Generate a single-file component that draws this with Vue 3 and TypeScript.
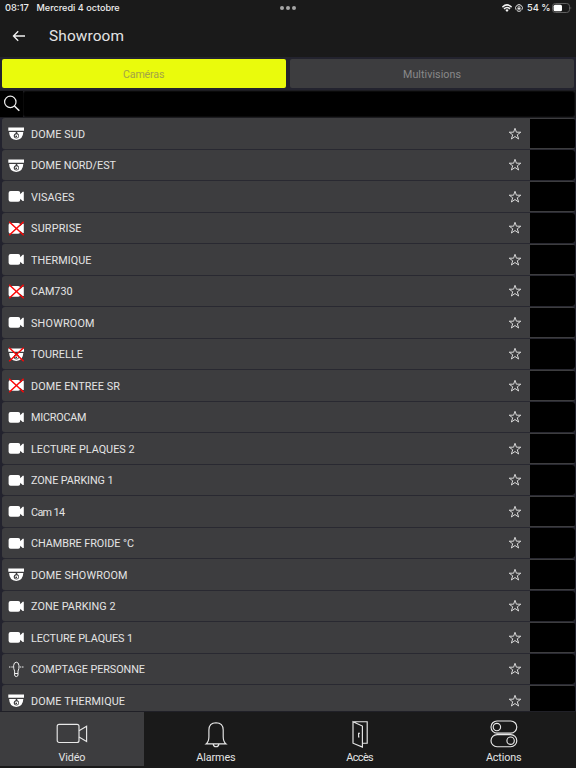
<script setup lang="ts">
type Kind = 'dome' | 'cam' | 'count'
interface Camera {
  name: string
  kind: Kind
  width: number
  off?: boolean
}

const cameras: Camera[] = [
  { name: 'DOME SUD', kind: 'dome', width: 54 },
  { name: 'DOME NORD/EST', kind: 'dome', width: 85 },
  { name: 'VISAGES', kind: 'cam', width: 43.5 },
  { name: 'SURPRISE', kind: 'cam', width: 50.5, off: true },
  { name: 'THERMIQUE', kind: 'cam', width: 60.5 },
  { name: 'CAM730', kind: 'cam', width: 41.5, off: true },
  { name: 'SHOWROOM', kind: 'cam', width: 63.5 },
  { name: 'TOURELLE', kind: 'dome', width: 52, off: true },
  { name: 'DOME ENTREE SR', kind: 'cam', width: 89, off: true },
  { name: 'MICROCAM', kind: 'cam', width: 55.5 },
  { name: 'LECTURE PLAQUES 2', kind: 'cam', width: 103.5 },
  { name: 'ZONE PARKING 1', kind: 'cam', width: 82.5 },
  { name: 'Cam 14', kind: 'cam', width: 34 },
  { name: 'CHAMBRE FROIDE °C', kind: 'cam', width: 103 },
  { name: 'DOME SHOWROOM', kind: 'dome', width: 96.5 },
  { name: 'ZONE PARKING 2', kind: 'cam', width: 84.5 },
  { name: 'LECTURE PLAQUES 1', kind: 'cam', width: 102 },
  { name: 'COMPTAGE PERSONNE', kind: 'count', width: 114 },
  { name: 'DOME THERMIQUE', kind: 'dome', width: 94 },
]
</script>

<template>
  <div class="screen">
    <div class="status">
      <span class="time">08:17</span>
      <span class="date">Mercredi 4 octobre</span>
      <span class="dots"><i></i><i></i><i></i></span>
      <span class="system">
        <svg width="10" height="8" viewBox="0 0 10 8" fill="none" stroke="#f2f2f2" stroke-width="1.5">
          <path d="M.4 3.1Q5-1.3 9.6 3.1M2 4.9Q5 2 8 4.9" />
          <path d="M3.3 6.1Q5 4.5 6.7 6.1L5 7.9Z" fill="#f2f2f2" stroke="none" />
        </svg>
        <svg class="lock" width="8" height="8" viewBox="0 0 8 8" fill="none" stroke="#e4e4e4" stroke-width="1">
          <path d="M1.1 5.8A3.4 3.4 0 1 1 6.9 5.8M1.8 6.6Q4 8.2 6.2 6.6" />
          <path d="M3.1 3.7V3a.9.9 0 0 1 1.8 0v.7" stroke-width=".7" />
          <rect x="2.5" y="3.6" width="3" height="2" fill="#e4e4e4" stroke="none" />
        </svg>
        <span class="percent">54 %</span>
        <svg width="20" height="10" viewBox="0 0 20 10">
          <rect x=".5" y=".5" width="17" height="9" rx="2.8" fill="none" stroke="#606060" />
          <rect x="1.6" y="1.7" width="8.4" height="6.6" rx="1.5" fill="#fff" />
          <path d="M18.6 3.5Q20 5 18.6 6.5Z" fill="#777" />
        </svg>
      </span>
    </div>

    <header class="header">
      <svg width="14" height="12" viewBox="0 0 14 12" fill="none" stroke="#f1f1f1" stroke-width="1.35">
        <path d="M13 6H1.5M6.2 1.3 1.5 6l4.7 4.7" />
      </svg>
      <h1><svg width="78" height="24"><text x="0" y="17" textLength="75">Showroom</text></svg></h1>
    </header>

    <main class="content">
      <nav class="tabs">
        <button class="tab selected"><svg width="42" height="18"><text x="0" y="12.5" textLength="41.5">Caméras</text></svg></button>
        <button class="tab"><svg width="58" height="18"><text x="0" y="12.5" textLength="58">Multivisions</text></svg></button>
      </nav>

      <div class="search">
        <svg width="17" height="17" viewBox="0 0 17 17" fill="none" stroke="#f0f0f0" stroke-width="1.2">
          <circle cx="7.3" cy="6.9" r="5.7" />
          <path d="m11.4 11 4.9 4.8" stroke-width="1.6" />
        </svg>
        <div class="field"></div>
      </div>

      <ul class="list">
        <li v-for="camera in cameras" :key="camera.name" class="row">
          <div class="info">
            <svg class="kind" width="17" height="17" viewBox="0 0 17 17">
              <path v-if="camera.kind === 'cam'" fill="#fff" d="M2.6 3.1h7.6q2 0 2 2v1.1l2.5-2.4h1.1v9.3h-1.1l-2.5-2.4v1.1q0 2-2 2H2.6q-2-.2-2-2V5.1q0-1.8 2-2Z" />
              <template v-else-if="camera.kind === 'dome'">
                <path fill="#fff" d="M.3 2.5H16v3.3H.3ZM1.1 7h14.2q-.2 7.6-7.1 7.9-6.8-.3-7.1-7.9Z" />
                <path fill="#3d3d3f" d="M5.6 11Q5.7 9 7.5 8.2L8 6.8h1.4l-.2 1.3q2.1.9 1.9 3.1-.4 2.4-2.6 2.4-2.5-.1-2.9-2.6Z" />
                <circle cx="8.6" cy="11" r="1.8" fill="#fff" />
                <circle cx="8.2" cy="11.4" r=".8" fill="#222" />
              </template>
              <g v-else fill="none" stroke="#f1f1f1" stroke-width="1">
                <path d="M5.6 4.8Q5.8 1.3 8.3 1.2q2.5.1 2.7 3.6.2 3-1 5.3v3.9q-.2 1.6-1.7 1.6T6.6 14v-3.9q-1.2-2.4-1-5.3ZM6.6 12.5H10M1 6h1.4M3.3 6h1.5M11.8 6h1.5M14 6h1.5" />
              </g>
              <path v-if="camera.off" d="M1.2 1.7 15.7 15.3M15.6 1.7 1.2 15.3" fill="none" stroke="#fa0808" stroke-width="1.5" />
            </svg>
            <svg class="name" width="125" height="18">
              <text x="0" y="12.7" :textLength="camera.width">{{ camera.name }}</text>
            </svg>
            <svg class="star" width="14" height="14" viewBox="0 0 14 14" fill="none" stroke="#dedede" stroke-width=".95">
              <path d="m7 1.3 1.4 3.9h4.4L9.3 7.8l1.3 4.2L7 9.5 3.4 12l1.3-4.2-3.5-2.6h4.4Z" />
            </svg>
          </div>
          <div class="preview"></div>
        </li>
      </ul>
    </main>

    <nav class="bottom">
      <a class="entry active">
        <svg width="32" height="30" viewBox="0 0 32 30">
          <rect x="1.2" y="5.3" width="21.8" height="18.2" rx="2" />
          <path d="m23 11.7 7.6-4.4v15.1L23 18.1" />
        </svg>
        <svg width="40" height="17"><text x="6.5" y="11.5" textLength="27">Vidéo</text></svg>
      </a>
      <a class="entry">
        <svg width="32" height="30" viewBox="0 0 32 30">
          <path d="M6.1 24.9q2.8-2.2 2.8-7.1V11q0-7.2 7.1-7.3 7.2.1 7.2 7.3v6.8q0 4.9 2.8 7.1ZM13.2 25.1q.2 2.5 2.8 2.6 2.7-.1 2.9-2.6" />
        </svg>
        <svg width="44" height="17"><text x="2.2" y="11.5" textLength="39.5">Alarmes</text></svg>
      </a>
      <a class="entry">
        <svg width="32" height="30" viewBox="0 0 32 30">
          <path d="M9 2.7h14.2v21.5H19M9 2.7l9.4 4.4v21L9 24.2ZM16 14.2h-1.4V18h.8" />
        </svg>
        <svg width="40" height="17"><text x="6.2" y="11.5" textLength="27.5">Accès</text></svg>
      </a>
      <a class="entry">
        <svg width="32" height="30" viewBox="0 0 32 30">
          <rect x="3" y="2" width="25.8" height="12.1" rx="6.05" />
          <circle cx="8.9" cy="8" r="3.7" />
          <rect x="3" y="15.6" width="25.8" height="12.1" rx="6.05" />
          <circle cx="22.6" cy="21.7" r="3.7" />
        </svg>
        <svg width="40" height="17"><text x="2" y="11.5" textLength="35.5">Actions</text></svg>
      </a>
    </nav>
  </div>
</template>

<style>
body {
  background: #191919;
}
</style>

<style scoped>
* {
  box-sizing: border-box;
}
.screen {
  width: 576px;
  height: 768px;
  display: flex;
  flex-direction: column;
  overflow: hidden;
  background: #1a1a1a;
  color: #e4e4e4;
  font-family: Roboto, "Open Sans", sans-serif;
}
svg {
  display: block;
  flex: none;
}
text {
  fill: currentColor;
}
.status {
  height: 16px;
  padding: 0 4px 0 5px;
  display: grid;
  grid-template-columns: 31.5px 243.5px 1fr auto;
  align-items: center;
  font: 500 9.3px/16px Inter, sans-serif;
  color: #eee;
}
.date {
  font-size: 9.1px;
}
.dots {
  display: flex;
  gap: 2px;
}
.dots i {
  width: 4px;
  height: 4px;
  border-radius: 50%;
  background: #a5a5a5;
}
.system {
  display: flex;
  align-items: center;
}
.lock {
  margin-left: 3px;
}
.percent {
  width: 25px;
  margin-left: 4px;
  white-space: nowrap;
}
.header {
  height: 41px;
  padding: 0 0 2px 12px;
  display: flex;
  align-items: center;
  gap: 23px;
}
h1 {
  margin: 0;
  font-size: 15.4px;
  font-weight: 400;
}
.content {
  flex: none;
  height: 654px;
  overflow: hidden;
  background: #23232e;
}
.tabs {
  height: 33px;
  padding: 2px 2px;
  display: grid;
  grid-template-columns: 1fr 1fr;
  gap: 4px;
}
.tab {
  border: 0;
  border-radius: 2px;
  padding: 0;
  display: flex;
  align-items: center;
  justify-content: center;
  background: #3d3d3f;
  color: #89898a;
  font: 400 10.7px Roboto, sans-serif;
}
.selected {
  background: #eafb0c;
  color: #a4a347;
}
.search {
  height: 28px;
  padding: 1px 1px 1px 0;
  display: flex;
  align-items: center;
  background: #1c1c20;
}
.search svg {
  width: 23px;
  height: 26px;
  padding: 4px 3px 5px 3px;
  background: #000;
}
.field {
  flex: 1;
  height: 26px;
  border: 1px solid #0a0a0a;
  border-radius: 3px;
  background: #000;
}
.list {
  margin: 0;
  padding: 0.4px 1px 0 1.5px;
  list-style: none;
  display: grid;
  grid-auto-rows: 30.5px;
  gap: 1px;
}
.row {
  display: flex;
  overflow: hidden;
  border-radius: 3px;
  background: #3d3d3f;
  box-shadow: 0 0.5px 0 #303034;
}
.info {
  flex: 1;
  display: flex;
  align-items: center;
  padding: 0 8px 0 6px;
}
.name {
  margin-left: 6px;
  font-size: 10.8px;
}
.star {
  margin-left: auto;
}
.preview {
  width: 45px;
  background: #000;
  margin: 0.5px 0;
}
.bottom {
  height: 53px;
  display: grid;
  grid-template-columns: repeat(4, 1fr);
  border-top: 1px solid #202027;
}
.entry {
  display: flex;
  flex-direction: column;
  align-items: center;
  padding-top: 7px;
  font-size: 10.8px;
}
.entry svg:first-child {
  fill: none;
  stroke: #e8e8e8;
  stroke-width: 1.15;
}
.active {
  background: #3d3d3f;
}
</style>
